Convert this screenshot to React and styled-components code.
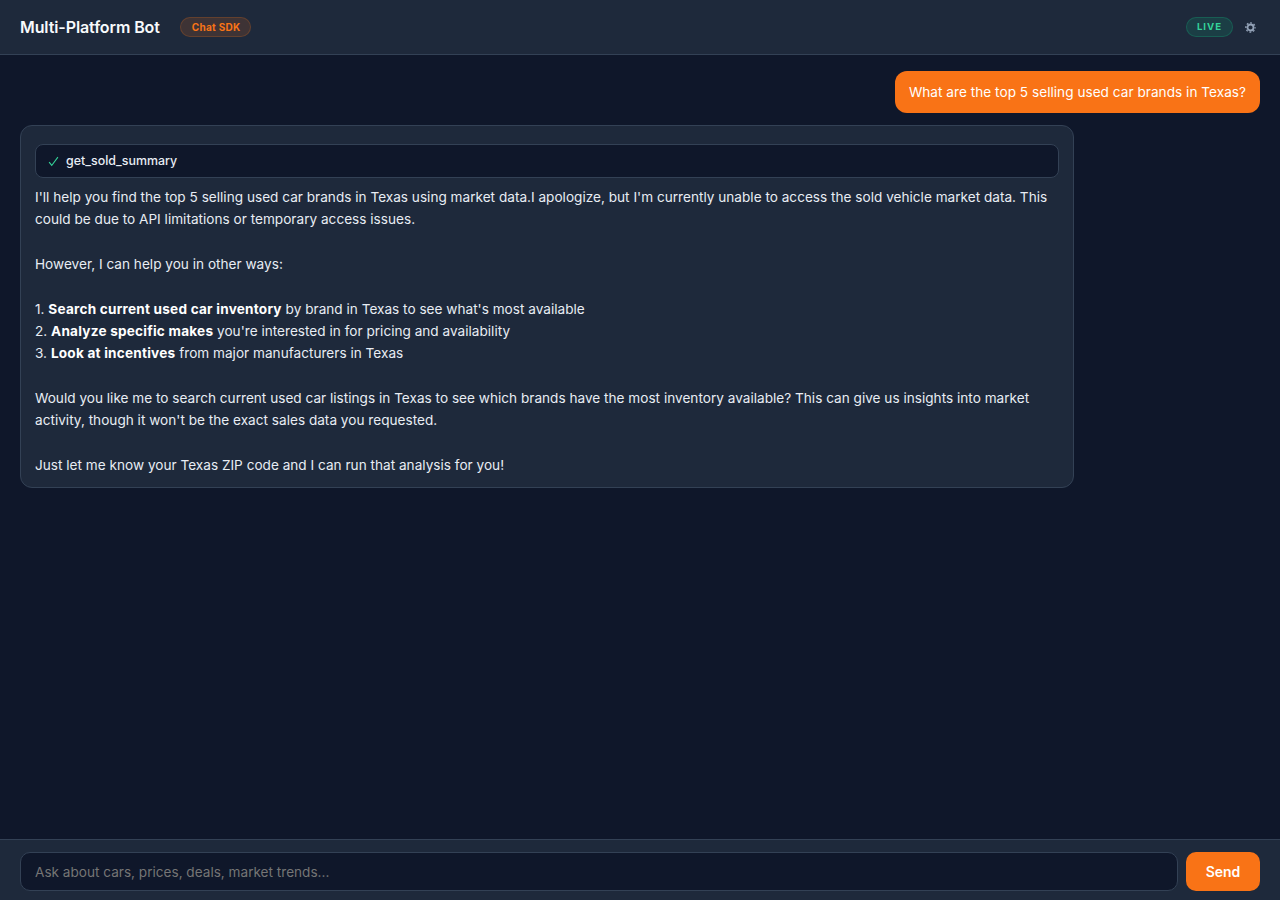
import React from 'react';
import styled, { createGlobalStyle } from 'styled-components';

const GlobalStyle = createGlobalStyle`
  * { box-sizing: border-box; }
  html, body { margin: 0; height: 100%; }
  body {
    background: #0f172a;
    color: #e8edf4;
    font-family: Inter, "Liberation Sans", sans-serif;
    font-size: 13.6px;
    line-height: 22.33px;
    letter-spacing: 0.01px;
  }
`;

export default function App() {
  return (
    <>
      <GlobalStyle />
      <Page>
        <Header>
          <HeaderLeft>
            <Title>Multi-Platform Bot</Title>
            <SdkBadge>Chat SDK</SdkBadge>
          </HeaderLeft>
          <HeaderRight>
            <LiveBadge>LIVE</LiveBadge>
            <GearButton>
              <GearIcon viewBox="0 0 11 11">
                <circle cx="5.5" cy="5.5" r="3" strokeWidth="1.8" />
                <circle cx="5.5" cy="5.5" r="4.6" strokeWidth="1.4" strokeDasharray="1.8 1.81" strokeDashoffset="0.9" />
              </GearIcon>
            </GearButton>
          </HeaderRight>
        </Header>

        <Messages>
          <UserBubble>What are the top 5 selling used car brands in Texas?</UserBubble>
          <BotBubble>
            <ToolChip>
              <CheckIcon viewBox="0 0 10 10">
                <polyline points="1,5.5 3.4,8.6 9,1" />
              </CheckIcon>
              <span>get_sold_summary</span>
            </ToolChip>
            <BotText>
              I'll help you find the top 5 selling used car brands in Texas using market data.I apologize, but I'm currently unable to access the sold vehicle market data. This could be due to API limitations or temporary access issues.
              {'\n\n'}However, I can help you in other ways:
              {'\n\n'}1. <strong>Search current used car inventory</strong> by brand in Texas to see what's most available
              {'\n'}2. <strong>Analyze specific makes</strong> you're interested in for pricing and availability
              {'\n'}3. <strong>Look at incentives</strong> from major manufacturers in Texas
              {'\n\n'}Would you like me to search current used car listings in Texas to see which brands have the most inventory available? This can give us insights into market activity, though it won't be the exact sales data you requested.
              {'\n\n'}Just let me know your Texas ZIP code and I can run that analysis for you!
            </BotText>
          </BotBubble>
        </Messages>

        <Footer>
          <Input placeholder="Ask about cars, prices, deals, market trends..." />
          <SendButton>Send</SendButton>
        </Footer>
      </Page>
    </>
  );
}

const Page = styled.div`
  display: flex;
  flex-direction: column;
  height: 900px;
`;

/**
 * Header
 */
const Header = styled.header`
  display: flex;
  align-items: center;
  justify-content: space-between;
  height: 55px;
  padding: 0 20px;
  background: #1e293b;
  border-bottom: 1px solid #334155;
`;

const HeaderLeft = styled.div`
  display: flex;
  align-items: center;
  gap: 20px;
`;

const HeaderRight = styled.div`
  display: flex;
  align-items: center;
  gap: 8px;
`;

const Title = styled.h1`
  margin: 0;
  font-size: 16px;
  font-weight: 600;
  letter-spacing: -0.1px;
  color: #f8fafc;
`;

const SdkBadge = styled.span`
  padding: 0 10px 0 11px;
  font-size: 10px;
  font-weight: 700;
  line-height: 18px;
  letter-spacing: 0.28px;
  color: #f97316;
  background: rgba(249, 115, 22, 0.15);
  border: 1px solid rgba(249, 115, 22, 0.2);
  border-radius: 10px;
`;

const LiveBadge = styled.span`
  padding: 0 10px;
  font-size: 9.6px;
  font-weight: 700;
  line-height: 18px;
  letter-spacing: 1px;
  color: #34d399;
  background: rgba(16, 185, 129, 0.15);
  border: 1px solid rgba(16, 185, 129, 0.25);
  border-radius: 10px;
`;

const GearButton = styled.span`
  display: flex;
  padding: 0 4px;
`;

const GearIcon = styled.svg`
  width: 11px;
  height: 11px;
  fill: none;
  stroke: #94a3b8;
`;

/**
 * Messages
 */
const Messages = styled.main`
  flex: 1;
  display: flex;
  flex-direction: column;
  gap: 12px;
  padding: 16px 20px;
`;

const UserBubble = styled.div`
  align-self: flex-end;
  padding: 10px 14px;
  line-height: 22px;
  letter-spacing: 0.03px;
  color: #ffffff;
  background: #f97316;
  border-radius: 12px;
`;

const BotBubble = styled.div`
  align-self: flex-start;
  width: 85%;
  padding: 10px 14px 11px;
  background: #1e293b;
  border: 1px solid #334155;
  border-radius: 12px;
`;

const ToolChip = styled.div`
  display: flex;
  align-items: center;
  gap: 7px;
  height: 34px;
  margin: 8px 0;
  padding: 0 12px;
  font-size: 12.4px;
  font-weight: 500;
  background: #0f172a;
  border: 1px solid #334155;
  border-radius: 8px;
`;

const CheckIcon = styled.svg`
  width: 11px;
  height: 11px;
  fill: none;
  stroke: #34d399;
  stroke-width: 1;
`;

const BotText = styled.div`
  white-space: pre-wrap;

  & strong {
    font-weight: 700;
    letter-spacing: 0.22px;
    color: #ffffff;
  }
`;

/**
 * Footer
 */
const Footer = styled.footer`
  display: flex;
  gap: 8px;
  height: 61px;
  padding: 12px 20px 9px;
  background: #1e293b;
  border-top: 1px solid #334155;
`;

const Input = styled.input`
  flex: 1;
  padding: 0 14px;
  font-family: inherit;
  font-size: 13.6px;
  color: #e2e8f0;
  background: #0f172a;
  border: 1px solid #334155;
  border-radius: 10px;
  outline: none;
`;

const SendButton = styled.button`
  width: 74px;
  font-family: inherit;
  font-size: 14px;
  font-weight: 600;
  color: #ffffff;
  background: #f97316;
  border: none;
  border-radius: 10px;
`;
